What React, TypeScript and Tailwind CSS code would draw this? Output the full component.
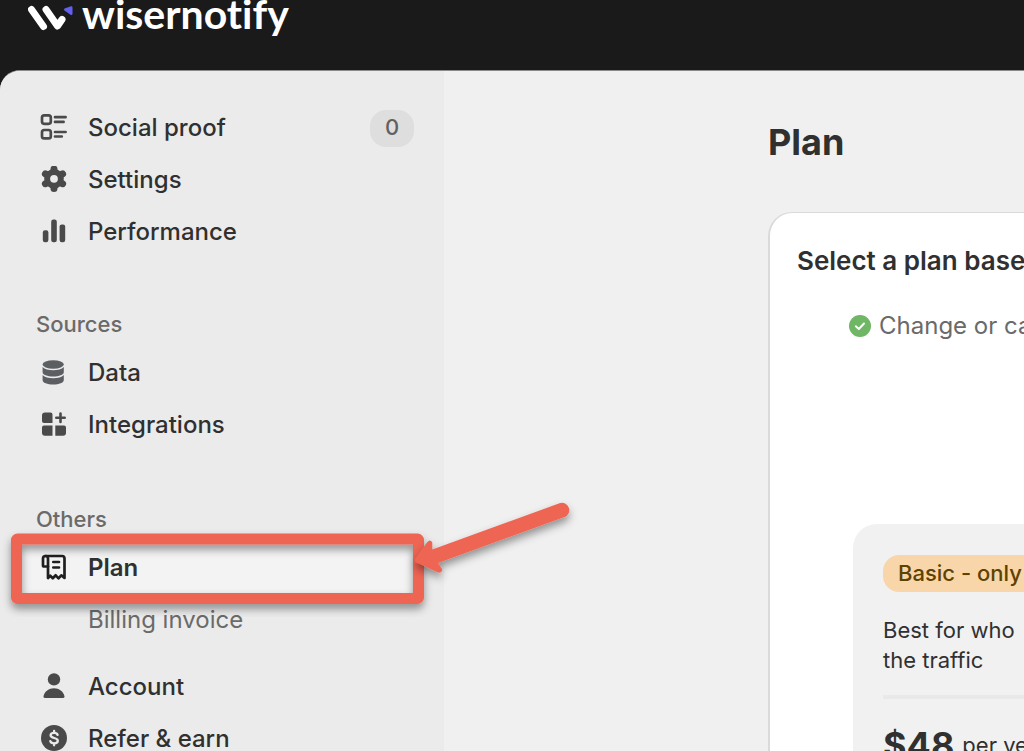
import type { ReactNode } from "react";

function ListIcon() {
  return (
    <svg viewBox="0 0 28 28" className="size-7" fill="none" stroke="#4a4a4a" strokeWidth="2.7" strokeLinecap="round">
      <rect x="2" y="1.400" width="8.800" height="8.400" rx="2.200" />
      <rect x="2" y="16" width="8.800" height="8.400" rx="2.200" />
      <path d="M15 3.200H25.600M15 7.900H23.600M15 18H25.600M15 22.500H21.800" />
    </svg>
  );
}

function GearIcon() {
  return (
    <svg viewBox="0 0 28 28" className="size-7">
      <path
        d="M14 3V22.600M5.400 7.900L22.600 17.700M5.400 17.700L22.600 7.900"
        stroke="#4a4a4a"
        strokeWidth="7"
        strokeLinecap="round"
        fill="none"
      />
      <circle cx="14" cy="12.800" r="9.800" fill="#4a4a4a" />
      <circle cx="14" cy="12.800" r="3.900" fill="#ebebeb" />
    </svg>
  );
}

function BarsIcon() {
  return (
    <svg viewBox="0 0 28 28" className="size-7" fill="#4a4a4a">
      <rect x="2.800" y="12.200" width="5.600" height="12" rx="2.200" />
      <rect x="11.200" y="1.600" width="5.600" height="22.600" rx="2.200" />
      <rect x="19.600" y="6.400" width="5.600" height="17.800" rx="2.200" />
    </svg>
  );
}

function DataIcon() {
  return (
    <svg viewBox="0 0 28 28" className="size-7" fill="#5c5f62">
      <ellipse cx="13.200" cy="5.500" rx="10.600" ry="4.200" />
      <path d="M2.600 8.100c2 2.300 6 3.200 10.600 3.200s8.600-.9 10.600-3.200v5.200c0 2.500-4.700 4.300-10.600 4.300S2.600 15.800 2.600 13.300z" />
      <path d="M2.600 16c2 2.300 6 3.200 10.600 3.200s8.600-.9 10.600-3.200v5c0 2.800-4.700 4.500-10.600 4.500S2.600 23.800 2.600 21z" />
    </svg>
  );
}

function AppsIcon() {
  return (
    <svg viewBox="0 0 28 28" className="size-7" fill="#4a4a4a">
      <path d="M5 1.500h5.500a2 2 0 0 1 2 2v8.500H4a2 2 0 0 1-2-2V4.500a3 3 0 0 1 3-3zM4 14.500h8.500v10.300H5a3 3 0 0 1-3-3v-5.300a2 2 0 0 1 2-2zM15.300 14.500H24a2 2 0 0 1 2 2v5.300a3 3 0 0 1-3 3h-7.700z" />
      <path d="M20.500 2.600v8.400M16.300 6.800h8.400" stroke="#4a4a4a" strokeWidth="2.600" strokeLinecap="round" />
    </svg>
  );
}

function ReceiptIcon() {
  return (
    <svg viewBox="0 0 28 28" className="size-7" fill="none" stroke="#1f1f1f" strokeWidth="2.700" strokeLinejoin="round" strokeLinecap="round">
      <path d="M5.500 2H22a2.500 2.500 0 0 1 2.500 2.500V24l-3.200-2.700-2.800 3-2.800-3-2.900 3-2.600-2.600L8 24V5.500" />
      <path d="M8 12.500H3.800A.8.8 0 0 1 3 11.700V4.500A2.500 2.500 0 0 1 8 4.500" />
      <path d="M13.300 8H19M13.300 13.500H19" />
    </svg>
  );
}

function PersonIcon() {
  return (
    <svg viewBox="0 0 28 28" className="size-7" fill="#4a4a4a">
      <circle cx="14" cy="6.400" r="6.200" />
      <path d="M3.500 23.300c1-5 5.500-8 10.500-8s9.500 3 10.500 8c.1.900-.4 1.700-1.300 1.700H4.800c-.9 0-1.400-.8-1.300-1.700z" />
    </svg>
  );
}

function DollarIcon() {
  return (
    <svg viewBox="0 0 28 28" className="size-7">
      <circle cx="14" cy="13" r="13" fill="#4a4a4a" />
      <path
        d="M17.600 9.800c-.4-1.300-1.700-2-3.500-2-2 0-3.500.9-3.500 2.500 0 3.600 7.200 1.800 7.200 5.400 0 1.600-1.500 2.600-3.700 2.600-2 0-3.400-.8-3.800-2.200M14.100 5.800v2M14.100 18.300v2"
        fill="none"
        stroke="#ebebeb"
        strokeWidth="2.300"
        strokeLinecap="round"
      />
    </svg>
  );
}

function NavItem({ icon, label, active, badge }: { icon: ReactNode; label: string; active?: boolean; badge?: string }) {
  return (
    <li>
      <a
        href="#"
        aria-current={active ? "page" : undefined}
        className={
          active
            ? "flex h-13 items-center bg-[#f3f3f3] pl-[18px] text-2xl font-semibold text-[#303030]"
            : "flex h-13 items-center pl-[18px] text-2xl font-medium text-[#303030]"
        }
      >
        <span className="mr-5">{icon}</span>
        <span>{label}</span>
        {badge && (
          <span className="ml-auto flex h-[37px] w-11 items-center justify-center rounded-2xl bg-[#dedede] text-[22px] font-medium text-[#616161]">
            {badge}
          </span>
        )}
      </a>
    </li>
  );
}

function NavLabel({ children }: { children: ReactNode }) {
  return <h2 className="mt-11 flex h-11 items-center pl-3.5 text-[22px] font-medium text-[#6a6a6a]">{children}</h2>;
}

function Callout() {
  return (
    <svg
      viewBox="0 0 590 120"
      className="pointer-events-none absolute top-[500px] left-0 h-[120px] w-[590px] overflow-visible"
      aria-hidden="true"
    >
      <defs>
        <filter id="shade" x="-10%" y="-20%" width="120%" height="150%">
          <feDropShadow dx="0" dy="5" stdDeviation="4" floodColor="#000" floodOpacity="0.4" />
        </filter>
      </defs>
      <rect x="16.500" y="39" width="402" height="59.500" rx="1" fill="none" stroke="#ee6553" strokeWidth="11" strokeLinejoin="round" filter="url(#shade)" />
      <path
        d="M415.500 62Q414.500 60.500 415.500 58.500L427 42.500Q430 38.500 432.300 42.500V49.500L559.500 3.300A7.200 7.200 0 0 1 564.500 17L438 63L442 69Q442.500 73 438 72.500Z"
        fill="#ee6553"
        filter="url(#shade)"
      />
    </svg>
  );
}

export default function App() {
  return (
    <div className="relative flex h-screen flex-col overflow-hidden bg-[#1a1a1a] font-['Inter',sans-serif]">
      <header className="flex h-[70px] shrink-0 items-start">
        <a href="#" className="flex items-start pl-7 text-white">
          <svg viewBox="0 0 46 32" className="h-8 w-[46px]" aria-hidden="true">
            <path d="M3.500 9.500L15.500 26.500M18 9.500L29.500 26L34 19.500" fill="none" stroke="#fff" strokeWidth="7" strokeLinecap="round" strokeLinejoin="round" />
            <path d="M36.500 8.500L43 6.200Q44.500 6 44.500 7.500V14Q44 15.500 42.500 14.700L36.500 10.500Q35.500 9.300 36.500 8.500Z" fill="#6460ef" />
          </svg>
          <span className="-mt-2 ml-2 font-['Lato',sans-serif] text-[41px] leading-[44px] font-bold [font-variant-ligatures:none]">
            wisernotify
          </span>
        </a>
      </header>

      <div className="flex min-h-0 flex-1 overflow-hidden rounded-tl-[20px] border-t border-[#8a8a8a] bg-[#f0f0f0]">
        <nav className="w-[444px] shrink-0 bg-[#ebebeb] px-[22px] pt-[31px]">
          <ul className="pr-2">
            <NavItem icon={<ListIcon />} label="Social proof" badge="0" />
            <NavItem icon={<GearIcon />} label="Settings" />
            <NavItem icon={<BarsIcon />} label="Performance" />
          </ul>
          <NavLabel>Sources</NavLabel>
          <ul className="mt-px">
            <NavItem icon={<DataIcon />} label="Data" />
            <NavItem icon={<AppsIcon />} label="Integrations" />
          </ul>
          <div className="pt-0.5">
            <NavLabel>Others</NavLabel>
          </div>
          <ul className="mt-px">
            <NavItem icon={<ReceiptIcon />} label="Plan" active />
            <li>
              <a href="#" className="flex h-13 items-center pl-[66px] text-2xl text-[#6a6a6a]">
                Billing invoice
              </a>
            </li>
          </ul>
          <ul className="mt-[15px]">
            <NavItem icon={<PersonIcon />} label="Account" />
            <NavItem icon={<DollarIcon />} label="Refer & earn" />
          </ul>
        </nav>

        <main className="min-w-0 flex-1 pl-[324px] text-[#303030]">
          <h1 className="mt-[47px] text-4xl leading-[48px] font-bold">Plan</h1>
          <section className="mt-[46px] h-full rounded-tl-3xl border-t border-l-2 border-[#dadada] bg-white pl-[27px] whitespace-nowrap">
            <h2 className="mt-7 text-[26px] leading-10 font-semibold">Select a plan based</h2>
            <p className="mt-[25px] ml-[52px] flex items-center gap-2 text-2xl leading-10 text-[#6a6a6a]">
              <svg viewBox="0 0 22 22" className="size-[22px] shrink-0" aria-hidden="true">
                <circle cx="11" cy="11" r="11" fill="#6fb765" />
                <path d="M6.800 11.300L9.800 14L15 8.500" fill="none" stroke="#fff" strokeWidth="2" strokeLinecap="round" strokeLinejoin="round" />
              </svg>
              Change or cancel
            </p>
            <article className="mt-[178px] ml-[56px] h-full rounded-tl-3xl bg-[#f1f1f1] pt-[31px] pl-[30px]">
              <h3 className="flex h-[37px] items-center rounded-l-2xl bg-[#f9d6a9] pl-[15px] text-[22px] font-medium text-[#5e4200]">
                Basic - only
              </h3>
              <p className="mt-[23px] text-[22px] leading-[30px]">
                Best for who
                <br />
                the traffic
              </p>
              <hr className="mt-5 border-t-4 border-[#e9e9e9]" />
              <p className="mt-6 flex items-center gap-2 text-[22px] leading-[44px]">
                <strong className="text-4xl leading-[44px] font-bold">$48</strong>
                <span>per year</span>
              </p>
            </article>
          </section>
        </main>
      </div>
      <Callout />
    </div>
  );
}
